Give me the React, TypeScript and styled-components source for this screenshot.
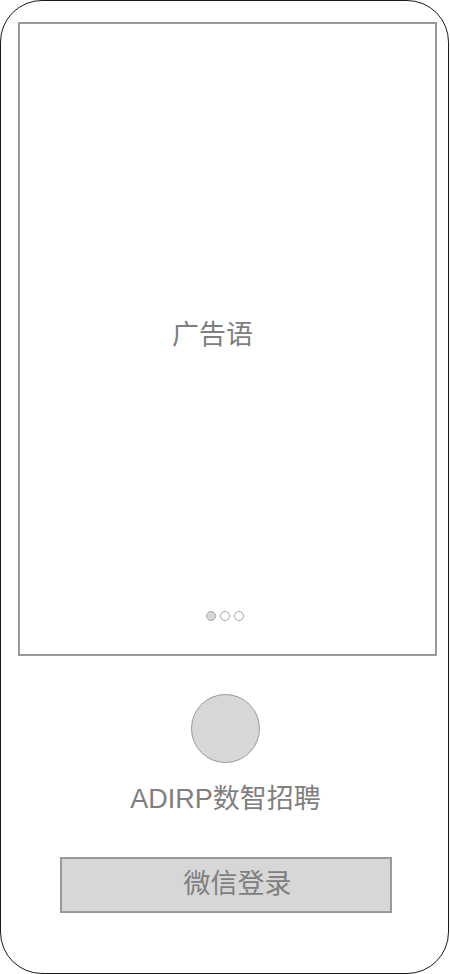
import React from "react";
import styled, { createGlobalStyle } from "styled-components";

const Global = createGlobalStyle`
  html, body { margin: 0; padding: 0; background: #ffffff; }
  body { font-family: "Liberation Sans", "Noto Sans CJK SC", sans-serif; }
  * { box-sizing: border-box; }
`;

const Phone = styled.div`
  width: 449px;
  height: 974px;
  border: 1px solid #1a1a1a;
  border-radius: 42px;
  padding: 21px 0 0 17px;
  display: flex;
  flex-direction: column;
  background: #fff;
`;

const Banner = styled.div`
  position: relative;
  width: 419px;
  height: 634px;
  border: 2px solid #999999;
  display: flex;
  align-items: center;
  justify-content: center;
  padding: 0 30px 8px 0;
`;

const Slogan = styled.span`
  font-size: 27px;
  line-height: 1;
  color: #7f7f7f;
`;

const Dots = styled.div`
  position: absolute;
  left: 0;
  right: 0;
  bottom: 33px;
  display: flex;
  justify-content: center;
  gap: 4px;
  padding-right: 5px;
`;

const Dot = styled.span<{ $active?: boolean }>`
  width: 10px;
  height: 10px;
  border-radius: 50%;
  border: 1px solid #a6a6a6;
  background: ${(p) => (p.$active ? "#d7d7d7" : "#ffffff")};
`;

const Bottom = styled.div`
  width: 415px;
  display: flex;
  flex-direction: column;
  align-items: center;
  padding-top: 38px;
`;

const Logo = styled.div`
  width: 69px;
  height: 69px;
  border-radius: 50%;
  background: #d7d7d7;
  border: 1px solid #999999;
`;

const AppName = styled.div`
  margin-top: 20px;
  font-size: 27px;
  line-height: 32px;
  color: #7f7f7f;
  white-space: nowrap;
`;

const LoginButton = styled.button`
  margin-top: 42px;
  width: 332px;
  height: 56px;
  border: 2px solid #999999;
  background: #d7d7d7;
  font-family: "Liberation Sans", "Noto Sans CJK SC", sans-serif;
  font-size: 27px;
  line-height: 1;
  color: #7f7f7f;
  padding: 0 0 2px 24px;
  display: flex;
  align-items: center;
  justify-content: center;
`;

export default function App() {
  return (
    <>
      <Global />
      <Phone>
        <Banner>
          <Slogan>广告语</Slogan>
          <Dots>
            <Dot $active />
            <Dot />
            <Dot />
          </Dots>
        </Banner>
        <Bottom>
          <Logo />
          <AppName>ADIRP数智招聘</AppName>
          <LoginButton>微信登录</LoginButton>
        </Bottom>
      </Phone>
    </>
  );
}
